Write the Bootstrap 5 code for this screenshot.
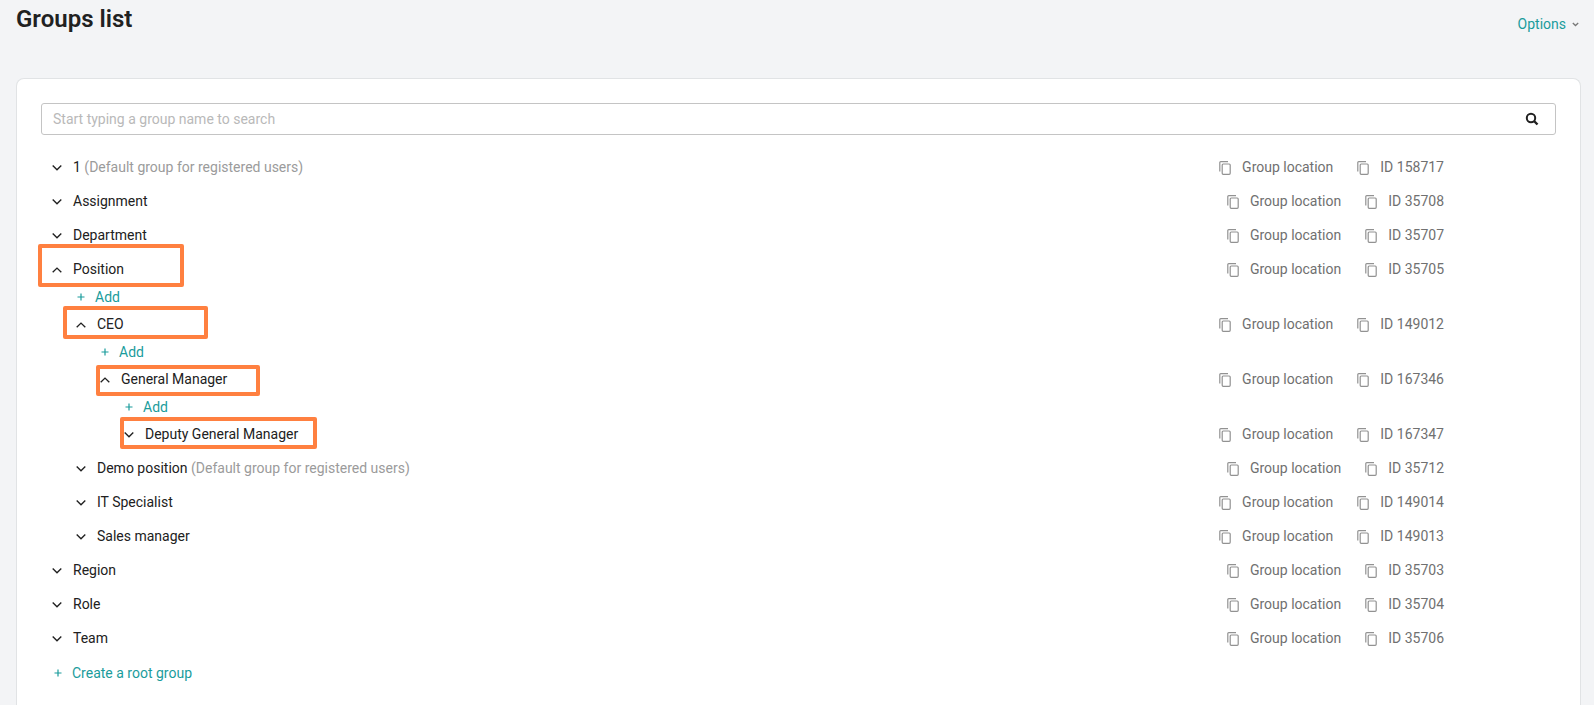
<!DOCTYPE html>
<html lang="en">
<head>
<meta charset="utf-8">
<meta name="viewport" content="width=device-width, initial-scale=1">
<title>Groups list</title>
<link href="https://cdn.jsdelivr.net/npm/bootstrap@5.3.0/dist/css/bootstrap.min.css" rel="stylesheet">
<style>
body{font-family:Roboto,"Liberation Sans",sans-serif;font-size:14px;line-height:20px;color:#212121;background:#f3f4f6}
h1{font-size:24px;line-height:28px;font-weight:600}
a,.btn-teal{color:#1a9c9c;text-decoration:none}
.page{padding:5px 13px 0 16px}
.page-head{min-height:73px}
.panel{border:1px solid #e1e3e5;border-radius:8px;padding:24px 24px 0;min-height:calc(100vh - 78px);border-bottom:0;border-bottom-left-radius:0;border-bottom-right-radius:0}
.search-box{border:1px solid #c4c4c4;border-radius:3px;height:32px;padding:0 16px 0 11px}
.search-box input{outline:0;color:#212121;font-size:14px}
.search-box input::placeholder{color:#b9b9b9;opacity:1}
.plain{border:0;background:none;padding:0;line-height:20px;display:inline-flex;align-items:center;font-weight:inherit}
.tree,.tree ul{list-style:none;margin:0;padding:0}
.tree{margin-top:15px}
.tree ul{padding-left:24px}
.tree-row{height:34px;padding:0 112px 0 10px;position:relative}
.toggle{width:12px;margin-right:10px;color:#212121}
.note{color:#9b9b9b}
.meta{gap:24px}
.meta .plain{color:#707070;gap:11px}
.copy-icon{margin-top:2px}
.add-row{height:21px;padding-left:12px}
.root-row{height:36px;padding-left:13px}
.btn-teal{gap:10px}
.options{gap:6px;margin:9px 2px 0 0}
.frame{position:absolute;border:4px solid #ff8040;border-radius:2px;pointer-events:none}
.frame-a{left:-3px;top:-8px;width:146px;height:43px}
.frame-b{left:-2px;top:-1px;width:145px;height:33px}
.frame-c{left:7px;top:3px;width:164px;height:31px}
.frame-d{left:7px;top:0;width:197px;height:32px}
</style>
</head>
<body>
<svg class="d-none" aria-hidden="true">
<symbol id="down" viewBox="0 0 12 12"><path d="M1.7 4.6 6 8.7 10.3 4.6" fill="none" stroke="currentColor" stroke-width="1.4"/></symbol>
<symbol id="up" viewBox="0 0 12 12"><path d="M1.7 9.2 6 5.1 10.3 9.2" fill="none" stroke="currentColor" stroke-width="1.4"/></symbol>
<symbol id="copy" viewBox="0 0 12 14"><path d="M.8 10.5V1.6q0-1 1-1H9" fill="none" stroke="#929292" stroke-width="1.2"/><rect x="3.2" y="3" width="8" height="10.3" rx="1" fill="none" stroke="#929292" stroke-width="1.2"/></symbol>
<symbol id="plus" viewBox="0 0 8 8"><path d="M4 .5v7M.5 4h7" fill="none" stroke="currentColor" stroke-width="1.2"/></symbol>
</svg>
<main class="page">
<header class="page-head d-flex justify-content-between align-items-start">
<h1 class="mb-0">Groups list</h1>
<button type="button" class="plain btn-teal options">Options <svg width="7" height="5" viewBox="0 0 7 5" aria-hidden="true"><path d="M.8 1 3.5 3.5 6.2 1" fill="none" stroke="#777" stroke-width="1.3"/></svg></button>
</header>
<section class="panel bg-white">
<form class="search-box d-flex align-items-center" role="search">
<input class="border-0 bg-transparent flex-grow-1 p-0" type="text" aria-label="Search groups" placeholder="Start typing a group name to search">
<button type="button" class="plain" aria-label="Search"><svg width="14" height="14" viewBox="0 0 14 14"><circle cx="6" cy="6" r="4.2" fill="none" stroke="#212121" stroke-width="2"/><path d="m9 9 3.5 3.5" stroke="#212121" stroke-width="2.4"/></svg></button>
</form>
<ul class="tree" id="groups"></ul>
<div class="root-row d-flex align-items-center"><button type="button" class="plain btn-teal"><svg width="8" height="8" aria-hidden="true"><use href="#plus"/></svg>Create a root group</button></div>
</section>
</main>
<script>
const groups = [
  {name: '1', id: 158717, note: true},
  {name: 'Assignment', id: 35708},
  {name: 'Department', id: 35707},
  {name: 'Position', id: 35705, frame: 'a', children: [
    {name: 'CEO', id: 149012, frame: 'b', children: [
      {name: 'General Manager', id: 167346, frame: 'c', children: [
        {name: 'Deputy General Manager', id: 167347, frame: 'd'}
      ]}
    ]},
    {name: 'Demo position', id: 35712, note: true},
    {name: 'IT Specialist', id: 149014},
    {name: 'Sales manager', id: 149013}
  ]},
  {name: 'Region', id: 35703},
  {name: 'Role', id: 35704},
  {name: 'Team', id: 35706}
];
const copy = '<svg width="12" height="14" class="copy-icon" aria-hidden="true"><use href="#copy"/></svg>';
const item = g => `<li><div class="tree-row d-flex align-items-center">
<button type="button" class="plain toggle" aria-label="Toggle ${g.name}" aria-expanded="${!!g.children}"><svg width="12" height="12"><use href="#${g.children ? 'up' : 'down'}"/></svg></button>
<span>${g.name}${g.note ? ' <span class="note">(Default group for registered users)</span>' : ''}</span>
<div class="meta d-flex ms-auto"><button type="button" class="plain">${copy}Group location</button><button type="button" class="plain">${copy}ID ${g.id}</button></div>
${g.frame ? `<span class="frame frame-${g.frame}"></span>` : ''}</div>
${g.children ? `<ul><li class="add-row d-flex align-items-center"><button type="button" class="plain btn-teal"><svg width="8" height="8" aria-hidden="true"><use href="#plus"/></svg>Add</button></li>${g.children.map(item).join('')}</ul>` : ''}</li>`;
document.getElementById('groups').innerHTML = groups.map(item).join('');
</script>
<script src="https://cdn.jsdelivr.net/npm/bootstrap@5.3.0/dist/js/bootstrap.bundle.min.js"></script>
</body>
</html>
